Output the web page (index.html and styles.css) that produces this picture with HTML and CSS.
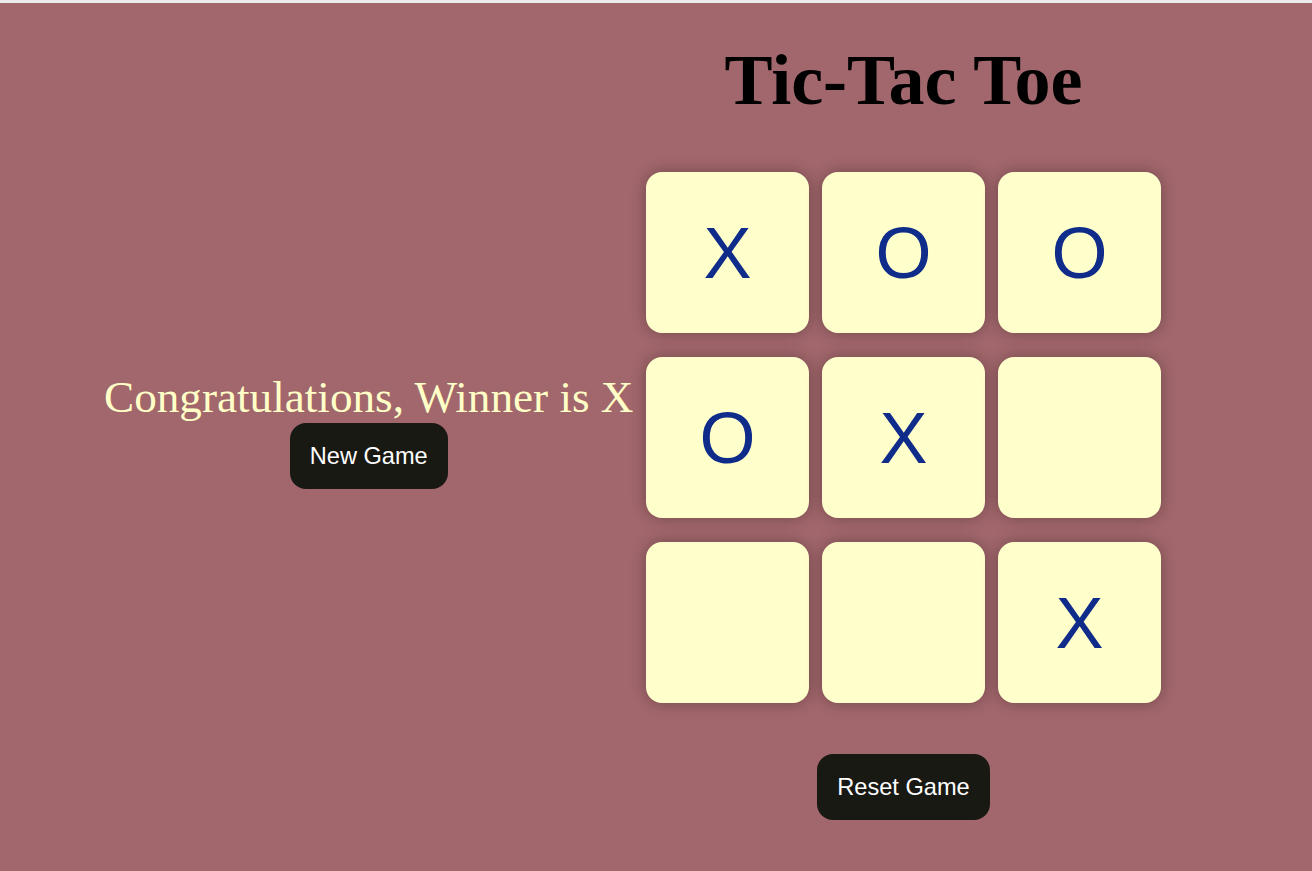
FILE: index.html
```html
<!DOCTYPE html>
<html lang="en">
<head>
<meta charset="utf-8">
<title>Tic-Tac Toe</title>
<link rel="stylesheet" href="styles.css">
</head>
<body>
<div class="page">
  <section class="msg">
    <p class="msg-text">Congratulations, Winner is X</p>
    <button class="btn">New Game</button>
  </section>
  <main class="game">
    <h1 class="title">Tic-Tac Toe</h1>
    <div class="board">
      <button class="cell">X</button>
      <button class="cell">O</button>
      <button class="cell">O</button>
      <button class="cell">O</button>
      <button class="cell">X</button>
      <button class="cell"></button>
      <button class="cell"></button>
      <button class="cell"></button>
      <button class="cell">X</button>
    </div>
    <button class="btn reset">Reset Game</button>
  </main>
</div>
</body>
</html>
```

FILE: styles.css
```css
html, body {
  margin: 0;
  padding: 0;
}
body {
  background: #a2676c;
  border-top: 3px solid #ececec;
  min-height: 868px;
  font-family: "Liberation Serif", "Times New Roman", serif;
}
.page {
  display: flex;
  align-items: flex-start;
  padding-left: 104px;
}
.msg {
  display: flex;
  flex-direction: column;
  align-items: center;
  margin-top: 368px;
}
.msg-text {
  margin: 0;
  font-size: 45.2px;
  color: #ffffc7;
  white-space: nowrap;
}
.btn {
  font-family: "Liberation Sans", Arial, sans-serif;
  font-size: 23.6px;
  color: #ffffff;
  background: #191914;
  border: none;
  border-radius: 16px;
  padding: 19.5px 20px;
  margin-top: 0;
}
.game {
  width: 540px;
  display: flex;
  flex-direction: column;
  align-items: center;
}
.title {
  margin: 36px 0 0;
  font-size: 72px;
  font-weight: bold;
  color: #000;
}
.board {
  margin-top: 50px;
  display: grid;
  grid-template-columns: repeat(3, 163px);
  grid-auto-rows: 161px;
  column-gap: 13px;
  row-gap: 24px;
}
.cell {
  border: none;
  border-radius: 16px;
  background: #ffffcc;
  box-shadow: 0 0 1rem rgba(0, 0, 0, 0.3);
  font-family: "Liberation Sans", Arial, sans-serif;
  font-size: 72px;
  color: #0f2c8a;
  padding: 0;
}
.reset {
  margin-top: 51px;
}
```
